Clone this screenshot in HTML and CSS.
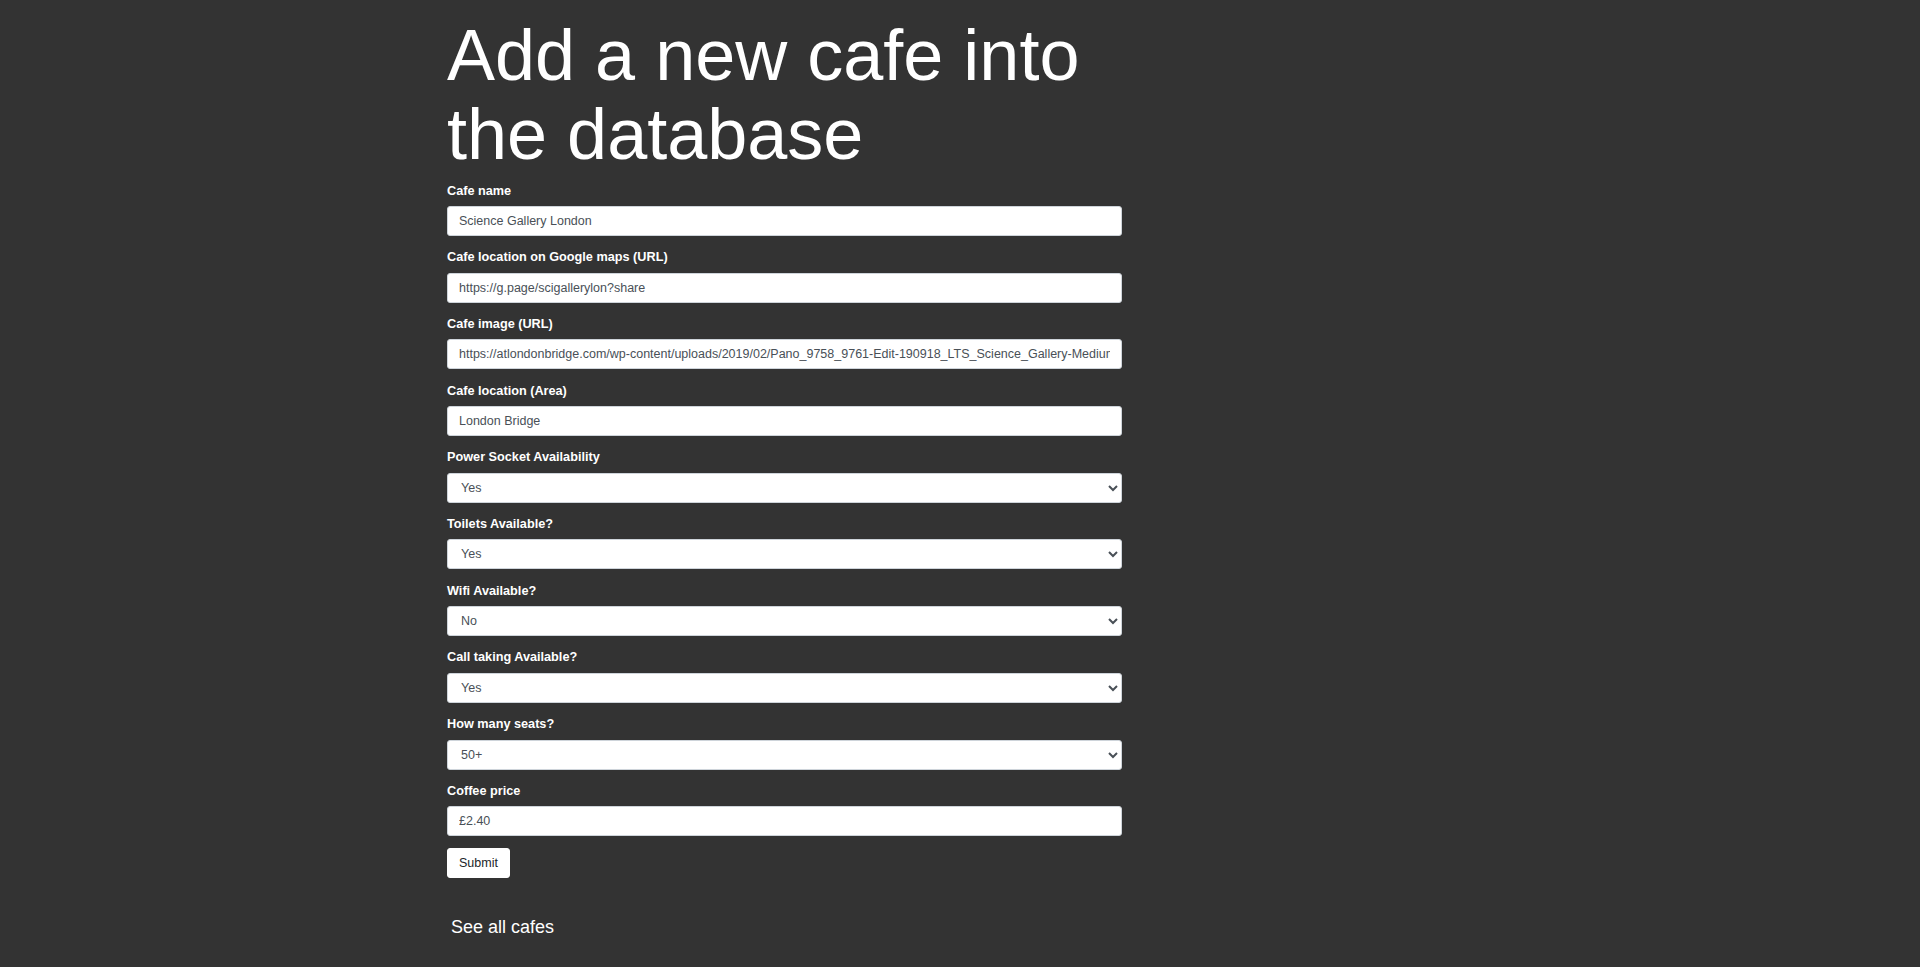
FILE: index.html
```html
<!DOCTYPE html>
<html lang="en">
<head>
<meta charset="utf-8">
<title>Add Cafe</title>
<link rel="stylesheet" href="styles.css">
</head>
<body>
<main class="container">
  <h1 class="title">Add a new cafe into the database</h1>
  <form class="cafe-form">
    <div class="field">
      <label for="name">Cafe name</label>
      <input class="control" id="name" type="text" value="Science Gallery London">
    </div>
    <div class="field">
      <label for="map">Cafe location on Google maps (URL)</label>
      <input class="control" id="map" type="text" value="https://g.page/scigallerylon?share">
    </div>
    <div class="field">
      <label for="img">Cafe image (URL)</label>
      <input class="control" id="img" type="text" value="https://atlondonbridge.com/wp-content/uploads/2019/02/Pano_9758_9761-Edit-190918_LTS_Science_Gallery-Medium-Crop.jpg">
    </div>
    <div class="field">
      <label for="loc">Cafe location (Area)</label>
      <input class="control" id="loc" type="text" value="London Bridge">
    </div>
    <div class="field">
      <label for="socket">Power Socket Availability</label>
      <select class="control select" id="socket"><option selected>Yes</option><option>No</option></select>
    </div>
    <div class="field">
      <label for="toilet">Toilets Available?</label>
      <select class="control select" id="toilet"><option selected>Yes</option><option>No</option></select>
    </div>
    <div class="field">
      <label for="wifi">Wifi Available?</label>
      <select class="control select" id="wifi"><option>Yes</option><option selected>No</option></select>
    </div>
    <div class="field">
      <label for="calls">Call taking Available?</label>
      <select class="control select" id="calls"><option selected>Yes</option><option>No</option></select>
    </div>
    <div class="field">
      <label for="seats">How many seats?</label>
      <select class="control select" id="seats"><option>0-10</option><option>10-20</option><option>20-30</option><option>30-40</option><option>40-50</option><option selected>50+</option></select>
    </div>
    <div class="field">
      <label for="price">Coffee price</label>
      <input class="control" id="price" type="text" value="£2.40">
    </div>
    <button class="btn" type="submit">Submit</button>
  </form>
  <p class="back"><a class="back-link" href="#">See all cafes</a></p>
</main>
</body>
</html>
```
FILE: styles.css
```css
html, body {
  margin: 0;
  padding: 0;
}
body {
  background: #333333;
  color: #ffffff;
  font-family: "Liberation Sans", Arial, sans-serif;
}
.container {
  width: 675px;
  margin: 0 0 0 447px;
  padding-top: 15.5px;
}
.title {
  font-size: 72px;
  line-height: 79px;
  font-weight: 400;
  margin: 0 0 7.5px;
}
.cafe-form {
  margin: 0;
}
.field {
  margin-bottom: 11.7px;
}
.field label {
  display: block;
  font-weight: 700;
  font-size: 12.7px;
  line-height: 19px;
  margin-bottom: 5.5px;
  padding-top: 0.5px;
}
.control {
  display: block;
  width: 100%;
  height: 30px;
  box-sizing: border-box;
  padding: 0 11px;
  font-family: "Liberation Sans", Arial, sans-serif;
  font-size: 12.5px;
  color: #495057;
  background-color: #ffffff;
  border: 1px solid #ced4da;
  border-radius: 3px;
  outline: none;
}
.select {
  padding-left: 9px;
}
.btn {
  display: block;
  margin-top: 1.5px;
  height: 30px;
  padding: 0 11px;
  font-family: "Liberation Sans", Arial, sans-serif;
  font-size: 12.5px;
  color: #212529;
  background: #ffffff;
  border: 1px solid #ffffff;
  border-radius: 3px;
}
.back {
  margin: 36px 0 0;
  padding-left: 4px;
  font-size: 18px;
  line-height: 27px;
}
.back-link {
  color: #ffffff;
  text-decoration: none;
}
```
